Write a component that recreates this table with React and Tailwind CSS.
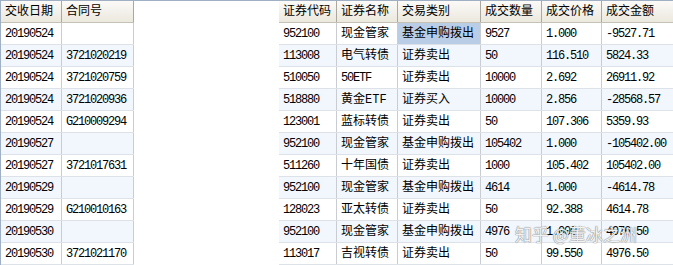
import React from "react";

const leftCols = [
  { title: "交收日期", w: "w-[61px]" },
  { title: "合同号", w: "w-[72px]" },
];

const rightCols = [
  { title: "证券代码", w: "w-[58px]" },
  { title: "证券名称", w: "w-[61px]" },
  { title: "交易类别", w: "w-[83px]" },
  { title: "成交数量", w: "w-[61px]" },
  { title: "成交价格", w: "w-[60px]" },
  { title: "成交金额", w: "w-[72px]" },
];

const rows = [
  ["20190524", "", "952100", "现金管家", "基金申购拨出", "9527", "1.000", "-9527.71"],
  ["20190524", "3721020219", "113008", "电气转债", "证券卖出", "50", "116.510", "5824.33"],
  ["20190524", "3721020759", "510050", "50ETF", "证券卖出", "10000", "2.692", "26911.92"],
  ["20190524", "3721020936", "518880", "黄金ETF", "证券买入", "10000", "2.856", "-28568.57"],
  ["20190524", "G210009294", "123001", "蓝标转债", "证券卖出", "50", "107.306", "5359.93"],
  ["20190527", "", "952100", "现金管家", "基金申购拨出", "105402", "1.000", "-105402.00"],
  ["20190527", "3721017631", "511260", "十年国债", "证券卖出", "1000", "105.402", "105402.00"],
  ["20190529", "", "952100", "现金管家", "基金申购拨出", "4614", "1.000", "-4614.78"],
  ["20190529", "G210010163", "128023", "亚太转债", "证券卖出", "50", "92.388", "4614.78"],
  ["20190530", "", "952100", "现金管家", "基金申购拨出", "4976", "1.000", "4976.50"],
  ["20190530", "3721021170", "113017", "吉视转债", "证券卖出", "50", "99.550", "4976.50"],
];

const isAscii = (s) => /^[\x00-\x7f]*$/.test(s);

const Cell = ({ text, w, selected, last }) => (
  <div
    className={`${w} shrink-0 h-full flex items-center pl-1 overflow-hidden whitespace-nowrap ${
      last ? "" : "border-r border-[#c9cdd2]"
    } ${selected ? "bg-[#b9cde6]" : ""} ${
      isAscii(text) ? "font-['Liberation_Mono'] tracking-[-1.2px]" : ""
    }`}
  >
    {text}
  </div>
);

const HeadCell = ({ title, w, last }) => (
  <div
    className={`${w} shrink-0 h-full flex items-center pl-1 whitespace-nowrap ${
      last ? "" : "border-r border-[#aaa89f]"
    }`}
  >
    {title}
  </div>
);

const Table = ({ cols, offset, leftBorder, hasLastEdge }) => (
  <div className={`flex flex-col ${leftBorder ? "border-l border-[#9fb0c4]" : ""}`}>
    <div className="h-[22px] flex bg-gradient-to-b from-[#fbfaf7] to-[#ebe8de] border-b border-[#c5c1b5]">
      {cols.map((c, i) => (
        <HeadCell key={c.title} {...c} last={!hasLastEdge && i === cols.length - 1} />
      ))}
    </div>
    {rows.map((r, ri) => (
      <div
        key={ri}
        className={`h-[22px] flex border-b border-[#dde2e8] ${
          ri % 2 === 1 ? "bg-[#f2f7fd]" : "bg-white"
        }`}
      >
        {cols.map((c, ci) => (
          <Cell
            key={ci}
            text={r[offset + ci]}
            w={c.w}
            selected={ri === 0 && offset + ci === 4}
            last={!hasLastEdge && ci === cols.length - 1}
          />
        ))}
      </div>
    ))}
  </div>
);

export default function App() {
  return (
    <div className="relative w-[673px] h-[265px] overflow-hidden bg-white border-t border-[#9fb0c4] text-[12px] leading-none text-black font-['Liberation_Mono','Noto_Sans_CJK_SC',monospace]">
      <div className="flex">
        <Table cols={leftCols} offset={0} leftBorder hasLastEdge />
        <div className="w-[145px] shrink-0" />
        <Table cols={rightCols} offset={2} />
      </div>

      {/* watermark */}
      <div className="absolute left-[515px] top-[224px] text-[17px] text-white/90 font-['Noto_Sans_CJK_SC',sans-serif] [text-shadow:0_0_1px_#777,0_0_1px_#777] whitespace-nowrap">
        知乎 @董冰之洲
      </div>
    </div>
  );
}
